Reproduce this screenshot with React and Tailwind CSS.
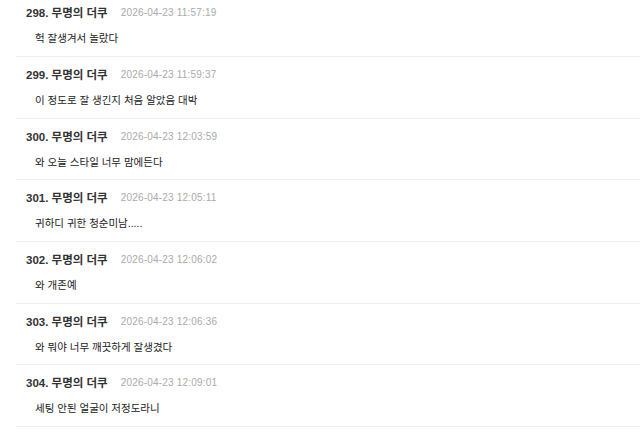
const comments = [
  { no: 298, time: '2026-04-23 11:57:19', text: '헉 잘생겨서 놀랐다' },
  { no: 299, time: '2026-04-23 11:59:37', text: '이 정도로 잘 생긴지 처음 알았음 대박' },
  { no: 300, time: '2026-04-23 12:03:59', text: '와 오늘 스타일 너무 맘에든다' },
  { no: 301, time: '2026-04-23 12:05:11', text: '귀하디 귀한 청순미남.....' },
  { no: 302, time: '2026-04-23 12:06:02', text: '와 개존예' },
  { no: 303, time: '2026-04-23 12:06:36', text: '와 뭐야 너무 깨끗하게 잘생겼다' },
  { no: 304, time: '2026-04-23 12:09:01', text: '세팅 안된 얼굴이 저정도라니' },
]

function CommentRow({ item }) {
  return (
    <div className="ml-4 h-[61.67px] border-b border-[#efefef] pl-[10px] pt-[11px]">
      <div className="flex h-[14px] items-center leading-[14px]">
        <span className="text-[11.5px] font-bold text-[#333333]">
          {item.no}. 무명의 더쿠
        </span>
        <span className="ml-[13px] text-[10px] tracking-[0.02em] text-[#aaaaaa]">{item.time}</span>
      </div>
      <div className="mt-[11px] h-[15px] pl-[9px] text-[10.5px] leading-[15px] text-[#222222]">
        {item.text}
      </div>
    </div>
  )
}

export default function App() {
  return (
    <div
      className="h-[435px] w-[640px] overflow-hidden bg-white"
      style={{ fontFamily: '"Liberation Sans", "Noto Sans CJK KR", sans-serif' }}
    >
      <div className="-mt-[4.7px]">
        {comments.map((item) => (
          <CommentRow key={item.no} item={item} />
        ))}
      </div>
    </div>
  )
}
